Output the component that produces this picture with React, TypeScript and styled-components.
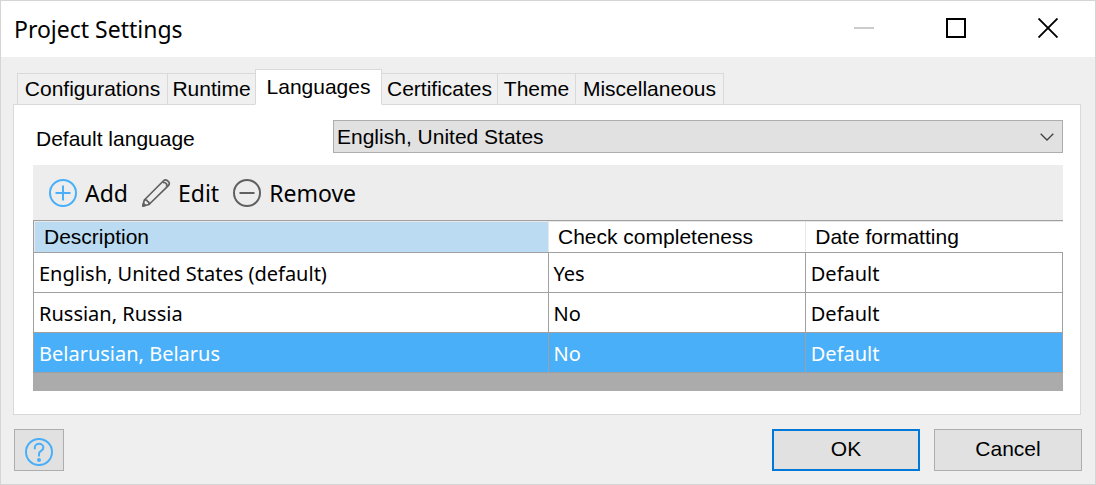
import React, { useState } from "react";
import styled, { createGlobalStyle } from "styled-components";

const sans = `"Liberation Sans", Arial, sans-serif`;
const humanist = `"Noto Sans", "Segoe UI", sans-serif`;
const grid = "#a0a0a0";
const edge = "#d9d9d9";
const sky = "#48aff8";

const GlobalStyle = createGlobalStyle`
  *, *::before, *::after { box-sizing: border-box; }
  body { margin: 0; background: #efefef; }
  button, select { font: inherit; color: inherit; margin: 0; }
`;

const Dialog = styled.div`
  display: flex;
  flex-direction: column;
  min-height: 100vh;
  border: 1px solid #d5d5d5;
  background: #efefef;
  color: #000;
  font: 21px/24px ${sans};
`;

const TitleBar = styled.header`
  display: flex;
  align-items: center;
  justify-content: space-between;
  height: 56px;
  padding-left: 13px;
  background: #fff;
`;

const Title = styled.h1`
  margin: 0;
  font: 400 23px/28px ${humanist};
`;

const WindowButtons = styled.div`
  display: flex;
  align-self: flex-start;
  padding-right: 1px;
`;

const WindowButton = styled.button`
  display: grid;
  place-items: center;
  width: 92px;
  height: 54px;
  padding: 0;
  border: 0;
  background: transparent;
`;

const Main = styled.main`
  display: flex;
  flex-direction: column;
  padding: 12px 14px 0 12px;
`;

const TabList = styled.div`
  display: flex;
  align-items: flex-end;
  padding-left: 4px;
  margin-bottom: -1px;
`;

const Tab = styled.button<{ $width: number; $active: boolean }>`
  flex: 0 0 auto;
  position: relative;
  width: ${(p) => p.$width}px;
  height: ${(p) => (p.$active ? 36 : 32)}px;
  margin-right: -1px;
  padding: 0;
  border: 1px solid ${edge};
  border-bottom-color: ${(p) => (p.$active ? "#fff" : edge)};
  background: ${(p) => (p.$active ? "#fff" : "#f0f0f0")};
  text-align: center;
  line-height: ${(p) => (p.$active ? 30 : 30)}px;
  white-space: nowrap;
  z-index: ${(p) => (p.$active ? 1 : 0)};
`;

const Panel = styled.section`
  display: flex;
  flex-direction: column;
  gap: 12px;
  padding: 15px 17px 23px 19px;
  border: 1px solid ${edge};
  background: #fff;
`;

const Field = styled.div`
  display: grid;
  grid-template-columns: 297px 1fr;
  align-items: center;
  padding-left: 3px;
`;

const FieldLabel = styled.label`
  padding-top: 4px;
`;

const SelectBox = styled.div`
  display: grid;
  align-items: center;
  > * { grid-area: 1 / 1; }
  > svg { justify-self: end; margin-right: 9px; pointer-events: none; }
`;

const Select = styled.select`
  appearance: none;
  width: 100%;
  height: 33px;
  padding: 0 32px 0 3px;
  border: 1px solid #adadad;
  border-radius: 0;
  background: #e1e1e1;
`;

const List = styled.div`
  background: #ababab;
  padding-bottom: 18px;
`;

const Toolbar = styled.div`
  display: flex;
  align-items: center;
  gap: 13px;
  height: 55px;
  padding-left: 15px;
  background: #ededed;
`;

const ToolButton = styled.button`
  display: flex;
  align-items: center;
  gap: 7px;
  padding: 0;
  border: 0;
  background: transparent;
  font: 23px/30px ${humanist};
`;

const Table = styled.table`
  width: 100%;
  table-layout: fixed;
  border-collapse: collapse;
  background: #fff;
`;

const HeadCell = styled.th<{ $width: string; $sorted?: boolean }>`
  width: ${(p) => p.$width};
  height: 32px;
  padding: 0 0 0 10px;
  border: solid ${grid};
  border-width: 1px 0;
  background: ${(p) => (p.$sorted ? "#badbf2" : "#fff")};
  box-shadow: inset 1px 1px 0 #e8e8e8;
  font-weight: 400;
  text-align: left;
  &:first-child { border-left-width: 1px; }
`;

const Row = styled.tr<{ $selected: boolean }>`
  background: ${(p) => (p.$selected ? sky : "#fff")};
  color: ${(p) => (p.$selected ? "#fff" : "#000")};
`;

const Cell = styled.td`
  height: 40px;
  padding: 3px 0 0 5px;
  border: 1px solid ${grid};
  font: 20px/30px ${humanist};
`;

const Footer = styled.footer`
  display: flex;
  align-items: center;
  gap: 14px;
  padding: 14px 13px 13px;
`;

const PushButton = styled.button<{ $primary?: boolean }>`
  width: 148px;
  height: 42px;
  padding: 0 0 2px;
  border: ${(p) => (p.$primary ? "2px solid #0078d7" : "1px solid #adadad")};
  background: #e1e1e1;
`;

const HelpButton = styled.button`
  display: grid;
  place-items: center;
  width: 50px;
  height: 42px;
  margin-right: auto;
  padding: 3px 0 0;
  border: 1px solid #adadad;
  background: #e1e1e1;
`;

const AddIcon = () => (
  <svg width="30" height="30" viewBox="0 0 30 30" fill="none" stroke={sky} strokeWidth="2">
    <circle cx="15" cy="15" r="13" />
    <path d="M7.500 15h15M15 7.500v15" />
  </svg>
);

const RemoveIcon = () => (
  <svg width="30" height="30" viewBox="0 0 30 30" fill="none" stroke="#606060" strokeWidth="2">
    <circle cx="15" cy="15" r="13" />
    <path d="M7.500 15h15" />
  </svg>
);

const EditIcon = () => (
  <svg width="30" height="30" viewBox="0 0 30 30" fill="none" stroke="#606060" strokeWidth="1.700" strokeLinejoin="round">
    <path d="M1.900 28 3.300 22 22.800 2.500Q24.600 1.200 26.400 2.600L27.600 3.800Q29 5.500 27.600 7.300L8 26.500Z" />
    <path d="M3.300 22Q6 21.500 6.600 23.500 8.500 24 8 26.500M22 4.800Q24.500 4 25 5.500 26.500 6.200 25.400 8.600" />
    <path d="M1.900 28l.6-2.500 1.900 1.900z" fill="#606060" />
  </svg>
);

const HelpIcon = () => (
  <svg width="30" height="30" viewBox="0 0 30 30" fill="none" stroke={sky} strokeWidth="2">
    <circle cx="15" cy="15" r="13" />
    <path d="M10.800 12.200V10.600a4.300 3.800 0 0 1 8.600 0c0 3.600-4.400 2.800-4.400 6.200v2.600" />
    <circle cx="15" cy="23" r="2" fill={sky} stroke="none" />
  </svg>
);

const tabs = [
  { name: "Configurations", width: 151 },
  { name: "Runtime", width: 89 },
  { name: "Languages", width: 127 },
  { name: "Certificates", width: 117 },
  { name: "Theme", width: 79 },
  { name: "Miscellaneous", width: 149 },
];

const languages = [
  { description: "English, United States (default)", check: "Yes", format: "Default" },
  { description: "Russian, Russia", check: "No", format: "Default" },
  { description: "Belarusian, Belarus", check: "No", format: "Default" },
];

export default function App() {
  const [tab, setTab] = useState("Languages");
  const [selected, setSelected] = useState(2);

  return (
    <Dialog role="dialog" aria-labelledby="dialog-title">
      <GlobalStyle />
      <TitleBar>
        <Title id="dialog-title">Project Settings</Title>
        <WindowButtons>
          <WindowButton aria-label="Minimize" disabled>
            <svg width="20" height="20"><path d="M0 10h20" stroke="#ccc" strokeWidth="2" /></svg>
          </WindowButton>
          <WindowButton aria-label="Maximize">
            <svg width="20" height="20"><path d="M1 1h18v18H1z" fill="none" stroke="#000" strokeWidth="2" /></svg>
          </WindowButton>
          <WindowButton aria-label="Close">
            <svg width="20" height="20"><path d="M.5.5l19 19M19.500.5l-19 19" stroke="#000" strokeWidth="1.900" /></svg>
          </WindowButton>
        </WindowButtons>
      </TitleBar>

      <Main>
        <TabList role="tablist">
          {tabs.map((t) => (
            <Tab
              key={t.name}
              role="tab"
              aria-selected={t.name === tab}
              $active={t.name === tab}
              $width={t.width}
              onClick={() => setTab(t.name)}
            >
              {t.name}
            </Tab>
          ))}
        </TabList>
        <Panel role="tabpanel">
          <Field>
            <FieldLabel htmlFor="default-language">Default language</FieldLabel>
            <SelectBox>
              <Select id="default-language" defaultValue="English, United States">
                <option>English, United States</option>
                <option>Russian, Russia</option>
                <option>Belarusian, Belarus</option>
              </Select>
              <svg width="14" height="8"><path d="M.7.8 7 7 13.300.8" fill="none" stroke="#404040" strokeWidth="1.300" /></svg>
            </SelectBox>
          </Field>
          <List>
            <Toolbar role="toolbar">
              <ToolButton><AddIcon />Add</ToolButton>
              <ToolButton><EditIcon />Edit</ToolButton>
              <ToolButton><RemoveIcon />Remove</ToolButton>
            </Toolbar>
            <Table>
              <thead>
                <tr>
                  <HeadCell $width="50%" $sorted>Description</HeadCell>
                  <HeadCell $width="25%">Check completeness</HeadCell>
                  <HeadCell $width="25%">Date formatting</HeadCell>
                </tr>
              </thead>
              <tbody>
                {languages.map((l, i) => (
                  <Row key={l.description} $selected={i === selected} onClick={() => setSelected(i)}>
                    <Cell>{l.description}</Cell>
                    <Cell>{l.check}</Cell>
                    <Cell>{l.format}</Cell>
                  </Row>
                ))}
              </tbody>
            </Table>
          </List>
        </Panel>
      </Main>

      <Footer>
        <HelpButton aria-label="Help"><HelpIcon /></HelpButton>
        <PushButton $primary>OK</PushButton>
        <PushButton>Cancel</PushButton>
      </Footer>
    </Dialog>
  );
}
